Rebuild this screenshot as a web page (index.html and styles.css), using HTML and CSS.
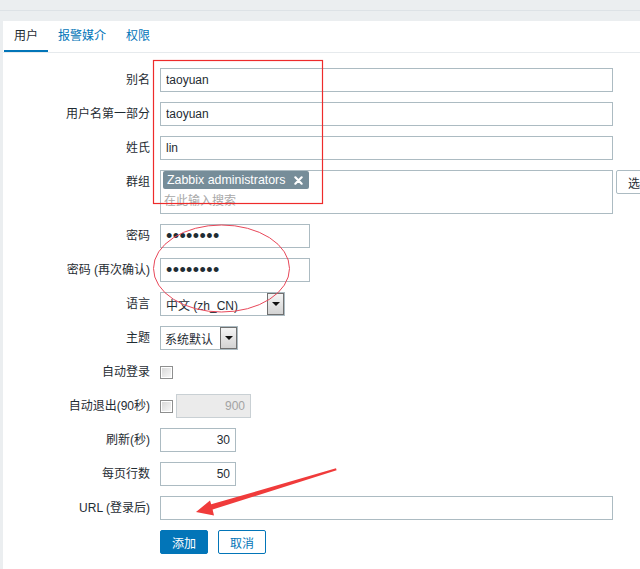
FILE: index.html
```html
<!DOCTYPE html>
<html lang="zh-CN">
<head>
<meta charset="utf-8">
<title>用户</title>
<link rel="stylesheet" href="styles.css">
</head>
<body>
<div class="page">
  <header class="page-head"><h1 class="page-title">用户</h1></header>
  <main class="panel">
    <nav class="tabs">
      <a class="tab active">用户</a>
      <a class="tab">报警媒介</a>
      <a class="tab">权限</a>
    </nav>
    <form class="form">
      <label class="lbl">别名</label>
      <div class="field"><input class="txt wide" type="text" value="taoyuan"></div>

      <label class="lbl">用户名第一部分</label>
      <div class="field"><input class="txt wide" type="text" value="taoyuan"></div>

      <label class="lbl">姓氏</label>
      <div class="field"><input class="txt wide" type="text" value="lin"></div>

      <label class="lbl lbl-top">群组</label>
      <div class="field">
        <div class="multiselect">
          <span class="tag">Zabbix administrators<svg class="tag-x" viewBox="0 0 10 10" width="9" height="9"><path d="M1.5 1.5 L8.5 8.5 M8.5 1.5 L1.5 8.5" stroke="#fff" stroke-width="2.4" stroke-linecap="round"/></svg></span>
          <input class="ms-search" type="text" placeholder="在此输入搜索">
        </div>
        <button type="button" class="btn-grey">选择</button>
      </div>

      <label class="lbl">密码</label>
      <div class="field"><input class="txt pw" type="password" value="12345678"></div>

      <label class="lbl">密码 (再次确认)</label>
      <div class="field"><input class="txt pw" type="password" value="12345678"></div>

      <label class="lbl">语言</label>
      <div class="field"><div class="select sel-lang"><span class="sel-text">中文 (zh_CN)</span><span class="sel-arrow"></span></div></div>

      <label class="lbl">主题</label>
      <div class="field"><div class="select sel-theme"><span class="sel-text">系统默认</span><span class="sel-arrow"></span></div></div>

      <label class="lbl">自动登录</label>
      <div class="field"><span class="checkbox"></span></div>

      <label class="lbl">自动退出(90秒)</label>
      <div class="field"><span class="checkbox"></span><input class="txt num disabled" type="text" value="900" disabled></div>

      <label class="lbl">刷新(秒)</label>
      <div class="field"><input class="txt num" type="text" value="30"></div>

      <label class="lbl">每页行数</label>
      <div class="field"><input class="txt num" type="text" value="50"></div>

      <label class="lbl">URL (登录后)</label>
      <div class="field"><input class="txt wide" type="text" value=""></div>

      <span class="lbl"></span>
      <div class="field actions">
        <button type="button" class="btn-primary">添加</button>
        <button type="button" class="btn-alt">取消</button>
      </div>
    </form>
  </main>
  <svg class="annot" width="640" height="569" viewBox="0 0 640 569">
    <rect x="153.5" y="60.5" width="169" height="143" fill="none" stroke="#ee2b2b" stroke-width="1.2"/>
    <ellipse cx="221.5" cy="268.5" rx="68" ry="43.5" fill="none" stroke="#e8485a" stroke-width="1"/>
    <polygon points="196,512 210,500.5 211.2,504.3 336,468.3 336.6,470.2 212.6,509.6 214,515.5" fill="#f03b3b"/>
  </svg>
</div>
</body>
</html>
```

FILE: styles.css
```css
html, body {
  margin: 0;
  padding: 0;
  overflow: hidden;
}
body {
  background: #ebeef0;
  font-family: "Liberation Sans", Arial, "Noto Sans CJK SC", sans-serif;
  font-size: 12px;
  color: #1f2c33;
}
.page {
  position: relative;
  width: 640px;
  height: 569px;
}
.page-head {
  height: 10px;
  overflow: hidden;
  border-bottom: 1px solid #dde2e6;
  margin-bottom: 10px;
}
.page-title {
  margin: -21px 0 0 0;
  font-size: 18px;
  line-height: 24px;
  font-weight: normal;
  color: #1f2c33;
}
.panel {
  margin-left: 3px;
  background: #fff;
  height: 548px;
  width: 700px;
}
.tabs {
  display: flex;
  height: 31px;
  border-bottom: 1px solid #e6eaed;
  padding-left: 1px;
}
.tab {
  padding: 0 10px;
  line-height: 31px;
  height: 29px;
  color: #0275b8;
  border-bottom: 2px solid transparent;
}
.tab.active {
  color: #1f2c33;
  border-bottom-color: #0275b8;
}
.form {
  display: grid;
  grid-template-columns: 147px 1fr;
  column-gap: 10px;
  row-gap: 10px;
  padding-top: 15px;
  align-items: center;
}
.lbl {
  text-align: right;
  line-height: 14px;
}
.lbl-top {
  align-self: start;
  padding-top: 5px;
}
.field {
  display: flex;
  align-items: center;
  min-height: 24px;
}
.txt {
  box-sizing: border-box;
  height: 24px;
  border: 1px solid #acbbc2;
  background: #fff;
  padding: 0 5px;
  margin: 0;
  font-family: "Liberation Sans", Arial, "Noto Sans CJK SC", sans-serif;
  font-size: 12px;
  color: #1f2c33;
  outline: none;
}
.wide { width: 453px; }
.pw {
  width: 150px;
  font-size: 18px;
  letter-spacing: 0.4px;
  color: #1f2c33;
}
.num {
  width: 76px;
  text-align: right;
}
.disabled {
  width: 75px;
  margin-left: 3px;
  background: #ebebeb;
  border-color: #c9d0d4;
  color: #a3a3a3;
}
.multiselect {
  box-sizing: border-box;
  width: 453px;
  height: 44px;
  border: 1px solid #acbbc2;
  padding: 0 2px;
  flex-shrink: 0;
}
.tag {
  display: inline-flex;
  align-items: center;
  height: 18px;
  padding: 0 6px 0 4px;
  background: #768d99;
  color: #fff;
  border-radius: 2px;
  line-height: 18px;
  font-size: 12.4px;
}
.tag-x {
  margin-left: 9px;
}
.ms-search {
  display: block;
  box-sizing: border-box;
  width: 100%;
  height: 22px;
  border: none;
  padding: 2px 1px 0;
  margin: 0;
  font-family: "Liberation Sans", Arial, "Noto Sans CJK SC", sans-serif;
  font-size: 12px;
  outline: none;
}
.ms-search::placeholder {
  color: #a8a8a8;
}
.btn-grey {
  flex-shrink: 0;
  margin-left: 3px;
  align-self: flex-start;
  height: 24px;
  padding: 0 11px;
  background: #fff;
  border: 1px solid #acbbc2;
  border-radius: 2px;
  font-family: "Liberation Sans", Arial, "Noto Sans CJK SC", sans-serif;
  font-size: 12px;
  color: #1f2c33;
}
.select {
  box-sizing: border-box;
  display: flex;
  align-items: center;
  height: 24px;
  border: 1px solid #acbbc2;
  background: #fff;
}
.sel-lang { width: 125px; }
.sel-theme { width: 78px; }
.sel-text {
  flex: 1;
  padding-left: 5px;
  white-space: nowrap;
}
.sel-theme .sel-text { padding-left: 4px; }
.sel-arrow {
  box-sizing: border-box;
  width: 17px;
  height: 22px;
  border: 1px solid #707070;
  background: linear-gradient(#f5f5f5, #d3d3d3);
  display: flex;
  align-items: center;
  justify-content: center;
}
.sel-arrow::after {
  content: "";
  border-left: 4px solid transparent;
  border-right: 4px solid transparent;
  border-top: 4px solid #111;
}
.checkbox {
  box-sizing: border-box;
  display: inline-block;
  width: 13px;
  height: 13px;
  border: 1px solid #8e8f8f;
  box-shadow: inset 0 0 0 1px #fff;
  background: linear-gradient(135deg, #d6d6d6, #fafafa);
}
.actions {
  gap: 10px;
}
.btn-primary, .btn-alt {
  box-sizing: border-box;
  width: 48px;
  height: 24px;
  border-radius: 2px;
  font-family: "Liberation Sans", Arial, "Noto Sans CJK SC", sans-serif;
  font-size: 12px;
  padding: 0;
  margin: 0;
}
.btn-primary {
  background: #0275b8;
  border: 1px solid #0275b8;
  color: #fff;
}
.btn-alt {
  background: #fff;
  border: 1px solid #0275b8;
  color: #0275b8;
}
.annot {
  position: absolute;
  top: 0;
  left: 0;
  pointer-events: none;
}
```
